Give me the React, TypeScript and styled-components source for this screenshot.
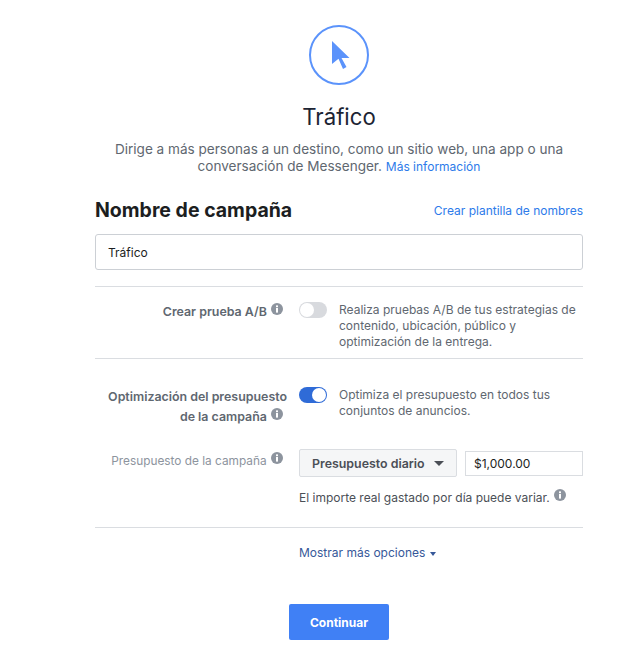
import React from "react";
import styled, { createGlobalStyle } from "styled-components";

const Global = createGlobalStyle`
  html, body {
    margin: 0;
    padding: 0;
    background: #fff;
  }
  body {
    font-family: Inter, "Liberation Sans", sans-serif;
    -webkit-font-smoothing: antialiased;
  }
`;

function InfoIcon() {
  return (
    <S.Info viewBox="0 0 12 12" aria-hidden="true">
      <circle cx="6" cy="6" r="6" fill="#8d949e" />
      <rect x="5" y="5" width="2" height="4.6" fill="#fff" />
      <rect x="5" y="2.4" width="2" height="1.8" fill="#fff" />
    </S.Info>
  );
}

export default function App() {
  return (
    <S.Page>
      <Global />
      <S.Hero>
        <S.Objective>
          <svg viewBox="0 0 18 28" width="18" height="28" aria-hidden="true">
            <path d="M0 0v23l6.5-5.3L11 28l3.5-2-5-9H17.5z" fill="#5b93fb" />
          </svg>
        </S.Objective>
        <S.Title>Tráfico</S.Title>
        <S.Lead>
          Dirige a más personas a un destino, como un sitio web, una app o una
          conversación de Messenger. <S.Link>Más información</S.Link>
        </S.Lead>
      </S.Hero>

      <S.NameHeader>
        <S.Heading>Nombre de campaña</S.Heading>
        <S.Link>Crear plantilla de nombres</S.Link>
      </S.NameHeader>
      <S.NameInput defaultValue="Tráfico" />

      <S.AbRow>
        <S.Label>
          <S.BoldText>
            Crear prueba A/B <InfoIcon />
          </S.BoldText>
        </S.Label>
        <S.Toggle />
        <S.Description>
          Realiza pruebas A/B de tus estrategias de contenido, ubicación,
          público y optimización de la entrega.
        </S.Description>
      </S.AbRow>

      <S.BudgetSection>
        <S.OptimizeRow>
          <S.Label>
            <S.BoldText>
              Optimización del presupuesto
              <br />
              de la campaña <InfoIcon />
            </S.BoldText>
          </S.Label>
          <S.Toggle $on />
          <S.Description>
            Optimiza el presupuesto en todos tus conjuntos de anuncios.
          </S.Description>
        </S.OptimizeRow>

        <S.AmountRow>
          <S.Label>
            <S.MutedText>
              Presupuesto de la campaña <InfoIcon />
            </S.MutedText>
          </S.Label>
          <S.AmountBody>
            <S.AmountControls>
              <S.Select>
                Presupuesto diario
                <S.Caret />
              </S.Select>
              <S.AmountInput defaultValue="$1,000.00" />
            </S.AmountControls>
            <S.Hint>
              El importe real gastado por día puede variar. <InfoIcon />
            </S.Hint>
          </S.AmountBody>
        </S.AmountRow>
      </S.BudgetSection>

      <S.MoreRow>
        <S.MoreLink>
          Mostrar más opciones
          <S.SmallCaret />
        </S.MoreLink>
      </S.MoreRow>

      <S.Footer>
        <S.Continue>Continuar</S.Continue>
      </S.Footer>
    </S.Page>
  );
}

const S = {
  Page: styled.div`
    box-sizing: border-box;
    width: 488px;
    height: 667px;
    margin-left: 95px;
    padding-top: 25px;
    overflow: hidden;
  `,
  Hero: styled.div`
    display: flex;
    flex-direction: column;
    align-items: center;
    text-align: center;
  `,
  Objective: styled.div`
    box-sizing: border-box;
    display: flex;
    align-items: center;
    justify-content: center;
    width: 60px;
    height: 60px;
    padding: 0 0 0 3px;
    border: 2px solid #5b93fb;
    border-radius: 50%;
  `,
  Title: styled.h1`
    margin: 17px 0 0;
    font-size: 22.2px;
    line-height: 30px;
    font-weight: 400;
    color: #1c2433;
  `,
  Lead: styled.p`
    width: 470px;
    margin: 9px 0 0;
    font-size: 13.55px;
    line-height: 17px;
    color: #606770;
  `,
  Link: styled.a`
    font-size: 12px;
    color: #2d7bea;
  `,
  NameHeader: styled.div`
    display: flex;
    align-items: center;
    justify-content: space-between;
    margin-top: 22px;
    height: 26px;
  `,
  Heading: styled.h2`
    margin: 0;
    font-size: 19.5px;
    line-height: 26px;
    font-weight: 700;
    color: #1c1e21;
  `,
  NameInput: styled.input`
    box-sizing: border-box;
    display: block;
    width: 100%;
    height: 36px;
    margin-top: 11px;
    padding: 0 12px;
    border: 1px solid #ccd0d5;
    border-radius: 3px;
    font-family: inherit;
    font-size: 12px;
    color: #1c1e21;
    outline: none;
  `,
  AbRow: styled.div`
    box-sizing: border-box;
    display: grid;
    grid-template-columns: 192px 28px 1fr;
    column-gap: 12px;
    height: 73px;
    margin-top: 16px;
    padding-top: 15px;
    border-top: 1px solid #dadde1;
    border-bottom: 1px solid #dadde1;
  `,
  BudgetSection: styled.div`
    box-sizing: border-box;
    height: 169px;
    padding-top: 28px;
    border-bottom: 1px solid #dadde1;
  `,
  OptimizeRow: styled.div`
    display: grid;
    grid-template-columns: 192px 28px 1fr;
    column-gap: 12px;
    height: 60px;
  `,
  AmountRow: styled.div`
    display: grid;
    grid-template-columns: 192px 1fr;
    column-gap: 12px;
    margin-top: 2px;
  `,
  Label: styled.div`
    text-align: right;
  `,
  BoldText: styled.span`
    display: block;
    margin-top: 0;
    font-size: 12.4px;
    line-height: 20px;
    font-weight: 600;
    color: #606770;
  `,
  MutedText: styled.span`
    display: block;
    padding-top: 3px;
    font-size: 11.85px;
    line-height: 16px;
    color: #8d949e;
  `,
  Info: styled.svg`
    display: inline-block;
    width: 12px;
    height: 12px;
    margin: 0 4px 0 1px;
    vertical-align: 1px;
  `,
  Toggle: styled.div<{ $on?: boolean }>`
    position: relative;
    box-sizing: border-box;
    width: 28px;
    height: 16px;
    border-radius: 8px;
    background: ${(p) => (p.$on ? "#2f6bd7" : "#d8dade")};

    &::after {
      content: "";
      position: absolute;
      top: 1px;
      left: ${(p) => (p.$on ? "13px" : "1px")};
      width: 14px;
      height: 14px;
      border-radius: 50%;
      background: #fff;
    }
  `,
  Description: styled.p`
    margin: 0;
    font-size: 12px;
    line-height: 16px;
    color: #606770;
  `,
  AmountBody: styled.div`
    display: flex;
    flex-direction: column;
  `,
  AmountControls: styled.div`
    display: flex;
    align-items: center;
  `,
  Select: styled.div`
    box-sizing: border-box;
    display: flex;
    align-items: center;
    width: 158px;
    height: 28px;
    padding-left: 12px;
    border: 1px solid #dadde1;
    border-radius: 2px;
    background: #f5f6f7;
    font-size: 12.4px;
    font-weight: 600;
    color: #4b4f56;
  `,
  Caret: styled.span`
    width: 0;
    height: 0;
    margin-left: 9px;
    border-left: 5px solid transparent;
    border-right: 5px solid transparent;
    border-top: 5px solid #4b4f56;
  `,
  AmountInput: styled.input`
    box-sizing: border-box;
    width: 118px;
    height: 25px;
    margin-left: 8px;
    padding: 0 8px;
    border: 1px solid #dadde1;
    font-family: inherit;
    font-size: 12px;
    color: #1c1e21;
    outline: none;
  `,
  Hint: styled.div`
    margin-top: 12px;
    font-size: 12px;
    line-height: 16px;
    color: #4b4f56;
  `,
  MoreRow: styled.div`
    margin-top: 15px;
    padding-left: 204px;
    line-height: 16px;
  `,
  MoreLink: styled.a`
    display: inline-flex;
    align-items: center;
    font-size: 12px;
    line-height: 16px;
    color: #365899;
  `,
  SmallCaret: styled.span`
    width: 0;
    height: 0;
    margin: 1px 0 0 5px;
    border-left: 3.5px solid transparent;
    border-right: 3.5px solid transparent;
    border-top: 4px solid #365899;
  `,
  Footer: styled.div`
    display: flex;
    justify-content: center;
    margin-top: 43px;
  `,
  Continue: styled.button`
    width: 100px;
    height: 36px;
    padding: 0;
    border: none;
    border-radius: 2px;
    background: #4080f5;
    font-family: inherit;
    font-size: 12px;
    font-weight: 700;
    color: #fff;
  `,
};
